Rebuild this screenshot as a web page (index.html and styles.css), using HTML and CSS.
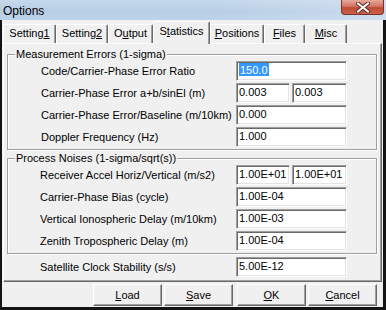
FILE: index.html
```html
<!DOCTYPE html>
<html lang="en">
<head>
    <meta charset="UTF-8">
    <title>Options</title>
    <link rel="stylesheet" href="styles.css">
</head>
<body>
    <div class="window">
        <div class="titlebar">
            <span class="title">Options</span>
            <span class="close">
                <svg width="14" height="11" viewBox="0 0 14 11">
                    <path d="M2 1.5 L12 9.5 M12 1.5 L2 9.5" stroke="#5a2a22" stroke-width="4" stroke-linecap="round"/>
                    <path d="M2 1.5 L12 9.5 M12 1.5 L2 9.5" stroke="#fff" stroke-width="2.2" stroke-linecap="round"/>
                </svg>
            </span>
        </div>
        <div class="client">
            <div class="tabs">
                <div class="tab tab-setting1">Setting<u>1</u></div>
                <div class="tab tab-setting2">Setting<u>2</u></div>
                <div class="tab tab-output">O<u>u</u>tput</div>
                <div class="tab tab-statistics active">S<u>t</u>atistics</div>
                <div class="tab tab-positions"><u>P</u>ositions</div>
                <div class="tab tab-files"><u>F</u>iles</div>
                <div class="tab tab-misc"><u>M</u>isc</div>
            </div>
            <div class="panel">
                <fieldset class="group">
                    <legend>Measurement Errors (1-sigma)</legend>
                    <div class="rows first">
                        <div class="row">
                            <span class="label">Code/Carrier-Phase Error Ratio</span>
                            <div class="edit"><span class="sel">150.0</span></div>
                        </div>
                        <div class="row">
                            <span class="label">Carrier-Phase Error a+b/sinEl (m)</span>
                            <div class="pair">
                                <div class="edit">0.003</div>
                                <div class="edit">0.003</div>
                            </div>
                        </div>
                        <div class="row">
                            <span class="label">Carrier-Phase Error/Baseline (m/10km)</span>
                            <div class="edit">0.000</div>
                        </div>
                        <div class="row">
                            <span class="label">Doppler Frequency (Hz)</span>
                            <div class="edit">1.000</div>
                        </div>
                    </div>
                </fieldset>
                <fieldset class="group second">
                    <legend>Process Noises (1-sigma/sqrt(s))</legend>
                    <div class="rows">
                        <div class="row">
                            <span class="label">Receiver Accel Horiz/Vertical (m/s2)</span>
                            <div class="pair">
                                <div class="edit">1.00E+01</div>
                                <div class="edit">1.00E+01</div>
                            </div>
                        </div>
                        <div class="row">
                            <span class="label">Carrier-Phase Bias (cycle)</span>
                            <div class="edit">1.00E-04</div>
                        </div>
                        <div class="row">
                            <span class="label">Vertical Ionospheric Delay (m/10km)</span>
                            <div class="edit">1.00E-03</div>
                        </div>
                        <div class="row">
                            <span class="label">Zenith Tropospheric Delay (m)</span>
                            <div class="edit">1.00E-04</div>
                        </div>
                    </div>
                </fieldset>
                <div class="row solo">
                    <span class="label">Satellite Clock Stability (s/s)</span>
                    <div class="edit">5.00E-12</div>
                </div>
            </div>
            <div class="buttons">
                <button type="button" class="btn btn-load"><u>L</u>oad</button>
                <button type="button" class="btn btn-save"><u>S</u>ave</button>
                <button type="button" class="btn btn-ok"><u>O</u>K</button>
                <button type="button" class="btn btn-cancel"><u>C</u>ancel</button>
            </div>
        </div>
    </div>
</body>
</html>
```

FILE: styles.css
```css
body {
    margin: 0;
    font-family: "Liberation Sans", Arial, sans-serif;
    font-size: 11px;
    color: #000;
}
.window {
    width: 386px;
    height: 310px;
    background: #141414;
    display: flex;
    flex-direction: column;
}
.titlebar {
    height: 20px;
    display: flex;
    justify-content: space-between;
    padding-left: 3px;
    background:
        linear-gradient(90deg, rgba(255, 255, 255, 0) 55%, rgba(255, 255, 255, 0.25) 100%),
        linear-gradient(180deg, #c6d9ec 0%, #b8cee5 55%, #bdd3ea 100%);
}
.title {
    font-size: 12px;
    line-height: 20px;
    padding-top: 1px;
}
.close {
    width: 41px;
    height: 14px;
    margin-right: 2px;
    display: flex;
    align-items: center;
    justify-content: center;
    border: 1px solid #7a3327;
    border-top: none;
    border-radius: 0 0 4px 4px;
    background: linear-gradient(180deg, #e7a99b 0%, #d27563 45%, #c04b36 55%, #c9604a 100%);
}
.client {
    flex: 1;
    margin: 0 3px 3px 2px;
    background: #f0f0f0;
    display: flex;
    flex-direction: column;
}

/* tabs */
.tabs {
    display: flex;
    align-items: flex-end;
    height: 23px;
    padding-left: 1px;
}
.tab {
    box-sizing: border-box;
    height: 19px;
    line-height: 17px;
    text-align: center;
    border-top: 1px solid #fff;
    border-left: 1px solid #fff;
    border-right: 1px solid #696969;
    box-shadow: inset -1px 0 #a0a0a0;
    border-radius: 2px 2px 0 0;
}
.tab.active {
    height: 23px;
    margin-bottom: -1px;
    line-height: 19px;
    background: #f0f0f0;
    position: relative;
    z-index: 1;
}
.tab-setting1 { width: 53px; }
.tab-setting2 { width: 52px; }
.tab-output { width: 45px; }
.tab-statistics { width: 57px; }
.tab-positions { width: 54px; }
.tab-files { width: 41px; }
.tab-misc { width: 42px; }

.panel {
    margin: 0 1px 0 1px;
    padding: 4px 0 4px 3px;
    border-top: 1px solid #fff;
    border-left: 1px solid #fff;
    border-right: 1px solid #696969;
    border-bottom: 1px solid #696969;
    box-shadow: inset -1px -1px #a0a0a0;
}

/* group boxes */
.group {
    margin: 0;
    padding: 0;
    width: 370px;
    box-sizing: border-box;
    border: 1px solid #a0a0a0;
    box-shadow: inset 1px 1px #fff, 1px 1px #fff;
}
.group.second {
    margin-top: 2px;
}
.group legend {
    margin-left: 7px;
    padding: 0 1px;
    line-height: 13px;
    background: #f0f0f0;
}
.rows {
    display: flex;
    flex-direction: column;
    gap: 2px;
    padding: 0 29px 2px 32px;
}
.rows.first {
    padding-left: 33px;
}
.row {
    display: grid;
    grid-template-columns: 1fr 111px;
    height: 20px;
    align-items: center;
}
.row.solo {
    margin-top: 3px;
    width: 340px;
    padding-left: 33px;
    box-sizing: border-box;
}
.pair {
    display: grid;
    grid-template-columns: 54px 55px;
    gap: 2px;
}

/* edit boxes */
.edit {
    box-sizing: border-box;
    height: 20px;
    line-height: 16px;
    padding-left: 2px;
    background: #fff;
    border-style: solid;
    border-width: 1px;
    border-color: #a0a0a0 #fff #fff #a0a0a0;
    box-shadow: inset 1px 1px #696969, inset -1px -1px #e3e3e3;
    white-space: nowrap;
}
.sel {
    background: #3399ff;
    color: #fff;
    padding: 1px 1px 0 1px;
}

/* buttons */
.buttons {
    display: flex;
    justify-content: flex-end;
    gap: 2px;
    padding: 2px 6px 0 0;
}
.btn {
    width: 69px;
    height: 22px;
    padding: 0;
    font-family: inherit;
    font-size: 11px;
    color: #000;
    background: #f0f0f0;
    border-style: solid;
    border-width: 1px;
    border-color: #fff #696969 #696969 #fff;
    box-shadow: inset -1px -1px #a0a0a0;
}
.btn-save {
    margin-right: 2px;
}
```
